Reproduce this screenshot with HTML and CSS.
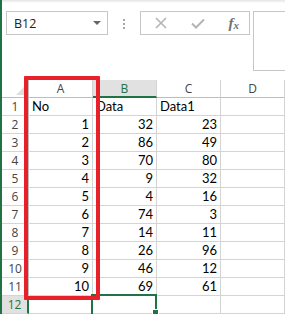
FILE: index.html
```html
<!DOCTYPE html>
<html lang="en">
<head>
    <meta charset="UTF-8">
    <title>Sheet</title>
    <link rel="stylesheet" href="styles.css">
</head>
<body>
    <div class="sheet">
        <div class="toolbar">
            <div class="namebox">
                <span>B12</span>
                <span class="arrow"></span>
            </div>
            <div class="dots"><i></i><i></i><i></i></div>
            <div class="fbuttons">
                <svg class="ico" width="12" height="12" viewBox="0 0 12 12"><path d="M1 1 L11 11 M11 1 L1 11" stroke="#b4b4b4" stroke-width="1.6" fill="none"/></svg>
                <svg class="ico" width="14" height="11" viewBox="0 0 14 11"><path d="M1 5.5 L5 9.5 L13 1.5" stroke="#b4b4b4" stroke-width="2" fill="none"/></svg>
                <span class="fx">f<sub>x</sub></span>
            </div>
            <div class="formula"></div>
        </div>

        <div class="grid">
            <div class="corner"><span class="tri"></span></div>
            <div class="ch">A</div>
            <div class="ch active">B</div>
            <div class="ch">C</div>
            <div class="ch">D</div>

            <div class="rh">1</div><div class="c">No</div><div class="c">Data</div><div class="c">Data1</div><div class="c"></div>
            <div class="rh">2</div><div class="c n">1</div><div class="c n">32</div><div class="c n">23</div><div class="c"></div>
            <div class="rh">3</div><div class="c n">2</div><div class="c n">86</div><div class="c n">49</div><div class="c"></div>
            <div class="rh">4</div><div class="c n">3</div><div class="c n">70</div><div class="c n">80</div><div class="c"></div>
            <div class="rh">5</div><div class="c n">4</div><div class="c n">9</div><div class="c n">32</div><div class="c"></div>
            <div class="rh">6</div><div class="c n">5</div><div class="c n">4</div><div class="c n">16</div><div class="c"></div>
            <div class="rh">7</div><div class="c n">6</div><div class="c n">74</div><div class="c n">3</div><div class="c"></div>
            <div class="rh">8</div><div class="c n">7</div><div class="c n">14</div><div class="c n">11</div><div class="c"></div>
            <div class="rh">9</div><div class="c n">8</div><div class="c n">26</div><div class="c n">96</div><div class="c"></div>
            <div class="rh">10</div><div class="c n">9</div><div class="c n">46</div><div class="c n">12</div><div class="c"></div>
            <div class="rh">11</div><div class="c n">10</div><div class="c n">69</div><div class="c n">61</div><div class="c"></div>
            <div class="rh active">12</div><div class="c"></div><div class="c sel"></div><div class="c"></div><div class="c"></div>
        </div>

        <div class="mark"></div>
    </div>
</body>
</html>
```

FILE: styles.css
```css
* {
    margin: 0;
    padding: 0;
    box-sizing: border-box;
}

body {
    width: 285px;
    height: 314px;
    overflow: hidden;
    background: #fff;
}

.sheet {
    position: relative;
    height: 314px;
    border-left: 2px solid #217346;
    background: linear-gradient(#e4e4e4, #fff 3px);
}

.toolbar {
    display: flex;
    align-items: flex-start;
    height: 80px;
    padding: 11px 0 0 4px;
}

.namebox {
    display: flex;
    align-items: center;
    justify-content: space-between;
    width: 102px;
    height: 24px;
    padding: 0 6px 0 7px;
    border: 1px solid #c6c6c6;
    font-family: "Open Sans", sans-serif;
    font-size: 12.5px;
    color: #222;
}

.arrow {
    width: 0;
    height: 0;
    border-left: 4px solid transparent;
    border-right: 4px solid transparent;
    border-top: 4px solid #666;
}

.dots {
    display: flex;
    flex-direction: column;
    gap: 2px;
    width: 4px;
    margin: 8px 13px 0 15px;
}

.dots i {
    display: block;
    width: 2px;
    height: 2px;
    background: #a8a8a8;
}

.fbuttons {
    display: flex;
    align-items: center;
    justify-content: space-between;
    width: 110px;
    height: 24px;
    padding: 0 10px 0 14px;
    border: 1px solid #c6c6c6;
}

.fx {
    font-family: "Liberation Serif", serif;
    font-style: italic;
    font-weight: bold;
    font-size: 15px;
    line-height: 1;
    color: #707070;
}

.fx sub {
    font-size: 11px;
    vertical-align: -1px;
}

.formula {
    flex: 1;
    height: 60px;
    margin-left: 3px;
    border: 1px solid #c6c6c6;
    border-right: none;
}

.grid {
    display: grid;
    grid-template-columns: 27px 64px 64px 64px 64px;
    grid-auto-rows: 18px;
}

.corner {
    position: relative;
    border-right: 1px solid #bdbdbd;
    border-bottom: 1px solid #bdbdbd;
}

.tri {
    position: absolute;
    right: 3px;
    bottom: 2px;
    width: 0;
    height: 0;
    border-left: 9px solid transparent;
    border-bottom: 9px solid #dedede;
}

.ch,
.rh {
    display: flex;
    align-items: center;
    justify-content: center;
    font-family: "Open Sans", sans-serif;
    font-size: 12px;
    color: #444;
}

.ch {
    border-right: 1px solid #d4d4d4;
    border-bottom: 1px solid #bdbdbd;
}

.ch.active {
    background: #e1e1e1;
    color: #217346;
    border-bottom: 2px solid #217346;
}

.rh {
    border-right: 1px solid #bdbdbd;
    border-bottom: 1px solid #d4d4d4;
}

.rh.active {
    background: #e1e1e1;
    color: #217346;
    border-right: 2px solid #217346;
}

.c {
    display: flex;
    align-items: flex-end;
    padding: 0 3px 1px 3px;
    border-right: 1px solid #d4d4d4;
    border-bottom: 1px solid #d4d4d4;
    font-family: Lato, "Liberation Sans", sans-serif;
    font-size: 13px;
    color: #000;
}

.c.n {
    justify-content: flex-end;
}

.c.sel {
    position: relative;
}

.c.sel::after {
    content: "";
    position: absolute;
    left: -2px;
    top: -2px;
    right: -1px;
    bottom: -4px;
    border: 2px solid #217346;
}

.c.sel::before {
    content: "";
    position: absolute;
    right: -3px;
    bottom: -3px;
    width: 5px;
    height: 5px;
    background: #217346;
    border: 1px solid #fff;
    z-index: 1;
}

.mark {
    position: absolute;
    left: 22px;
    top: 76px;
    width: 76px;
    height: 224px;
    border: 4px solid #e8202a;
    border-radius: 1px;
}
```
